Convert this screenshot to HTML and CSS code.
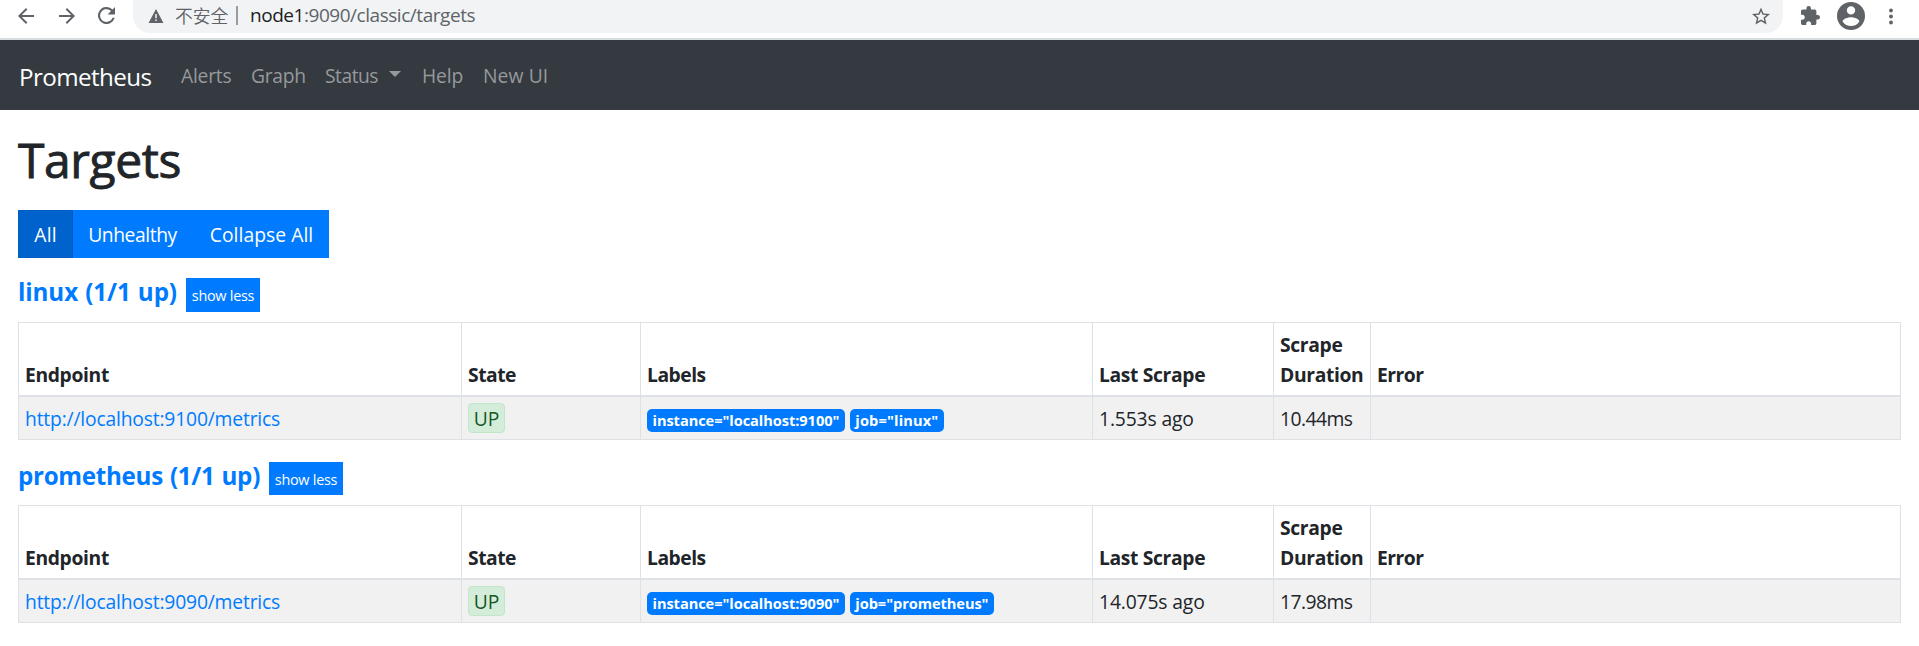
FILE: index.html
```html
<!DOCTYPE html>
<html lang="en">
<head>
<meta charset="utf-8">
<title>Prometheus Time Series Collection and Processing Server</title>
<link rel="stylesheet" href="styles.css">
</head>
<body>
<header class="browser">
  <svg class="nav-icon back" viewBox="0 0 16 16"><path d="M16 7H3.8l5.6-5.6L8 0 0 8l8 8 1.4-1.4L3.8 9H16z"/></svg>
  <svg class="nav-icon forward" viewBox="0 0 16 16"><path d="M8 0 6.6 1.4 12.2 7H0v2h12.2l-5.6 5.6L8 16l8-8z"/></svg>
  <svg class="nav-icon reload" viewBox="0 0 16 16"><path d="M13.65 2.35A8 8 0 1 0 15.73 10h-2.08A6 6 0 1 1 8 2c1.66 0 3.14.69 4.22 1.78L9 7h7V0z"/></svg>
  <div class="omnibox">
    <svg class="warn" viewBox="0 0 16 15"><path fill-rule="evenodd" d="M8 0 16 15H0zM7.2 5.3v4.5h1.6V5.3zM7.2 11.2v1.7h1.6v-1.7z"/></svg>
    <span class="insecure">不安全</span>
    <span class="sep"></span>
    <span class="url"><b>node1</b>:9090/classic/targets</span>
    <svg class="star" viewBox="2 2 20 19"><path d="M22 9.24l-7.19-.62L12 2 9.19 8.63 2 9.24l5.46 4.73L5.82 21 12 17.27 18.18 21l-1.63-7.03L22 9.24zM12 15.4l-3.76 2.27 1-4.28-3.32-2.88 4.38-.38L12 6.1l1.71 4.04 4.38.38-3.32 2.88 1 4.28L12 15.4z"/></svg>
  </div>
  <svg class="puzzle" viewBox="2 1 21 21"><path d="M20.5 11H19V7c0-1.1-.9-2-2-2h-4V3.500a2.500 2.500 0 0 0-5 0V5H4c-1.100 0-1.990.9-1.990 2v3.800H3.500c1.490 0 2.700 1.210 2.700 2.700s-1.210 2.700-2.700 2.700H2V20c0 1.100.9 2 2 2h3.800v-1.500c0-1.490 1.210-2.700 2.700-2.700s2.700 1.210 2.700 2.700V22H17c1.100 0 2-.9 2-2v-4h1.500a2.500 2.500 0 0 0 0-5z"/></svg>
  <svg class="avatar" viewBox="2 2 20 20"><path d="M12 2a10 10 0 1 0 0 20 10 10 0 0 0 0-20zm0 3a3 3 0 1 1 0 6 3 3 0 0 1 0-6zm0 14.200a7.200 7.200 0 0 1-6-3.220c.03-1.990 4-3.080 6-3.080s5.970 1.090 6 3.080a7.200 7.200 0 0 1-6 3.220z"/></svg>
  <svg class="menu" viewBox="0 0 4 16"><circle cx="2" cy="2" r="1.900"/><circle cx="2" cy="8" r="1.900"/><circle cx="2" cy="14" r="1.900"/></svg>
</header>
<nav class="navbar">
  <a class="brand">Prometheus</a>
  <a class="link alerts">Alerts</a>
  <a class="link graph">Graph</a>
  <a class="link status">Status</a><i class="caret"></i>
  <a class="link help">Help</a>
  <a class="link newui">New UI</a>
</nav>
<main class="content">
  <h1 class="title">Targets</h1>
  <div class="btn-group">
    <button class="btn active">All</button>
    <button class="btn unhealthy">Unhealthy</button>
    <button class="btn collapse">Collapse All</button>
  </div>

  <section class="job">
    <div class="job-head"><h2 class="job-name linux">linux (1/1 up)</h2><button class="toggle">show less</button></div>
    <table class="targets">
      <colgroup><col class="c1"><col class="c2"><col class="c3"><col class="c4"><col class="c5"><col class="c6"></colgroup>
      <thead><tr><th>Endpoint</th><th class="tight">State</th><th class="tight">Labels</th><th>Last Scrape</th><th>Scrape<br>Duration</th><th class="tight">Error</th></tr></thead>
      <tbody><tr>
        <td><a class="endpoint">http://localhost:9100/metrics</a></td>
        <td><span class="up">UP</span></td>
        <td><div class="labels"><span class="label">instance="localhost:9100"</span><span class="label short">job="linux"</span></div></td>
        <td>1.553s ago</td><td class="ms">10.44ms</td><td></td>
      </tr></tbody>
    </table>
  </section>

  <section class="job">
    <div class="job-head"><h2 class="job-name">prometheus (1/1 up)</h2><button class="toggle">show less</button></div>
    <table class="targets">
      <colgroup><col class="c1"><col class="c2"><col class="c3"><col class="c4"><col class="c5"><col class="c6"></colgroup>
      <thead><tr><th>Endpoint</th><th class="tight">State</th><th class="tight">Labels</th><th>Last Scrape</th><th>Scrape<br>Duration</th><th class="tight">Error</th></tr></thead>
      <tbody><tr>
        <td><a class="endpoint">http://localhost:9090/metrics</a></td>
        <td><span class="up">UP</span></td>
        <td><div class="labels"><span class="label">instance="localhost:9090"</span><span class="label">job="prometheus"</span></div></td>
        <td>14.075s ago</td><td class="ms">17.98ms</td><td></td>
      </tr></tbody>
    </table>
  </section>
</main>
</body>
</html>
```
FILE: styles.css
```css
* { box-sizing: border-box; }
body {
  margin: 0;
  height: 646px;
  overflow: hidden;
  background: #fff;
  color: #212529;
  font: 19.3px/30px "Open Sans", "Noto Sans CJK SC", sans-serif;
}
svg { display: block; flex: none; fill: #5f6368; }

/* Browser toolbar */
.browser {
  display: flex;
  align-items: flex-start;
  height: 40px;
  border-bottom: 2px solid #d8dddf;
}
.nav-icon { width: 16px; height: 16px; margin-top: 8px; }
.back { margin-left: 18px; }
.forward { margin-left: 25px; }
.reload { width: 17px; height: 17px; margin: 7px 0 0 23px; }
.omnibox {
  display: flex;
  align-items: flex-start;
  width: 1650px;
  height: 33px;
  margin-left: 18px;
  padding-left: 15px;
  border-radius: 0 0 17px 17px;
  background: #f1f3f4;
}
.warn { width: 16px; height: 14px; margin-top: 9px; }
.insecure {
  width: 56px;
  margin: 1px 0 0 11px;
  color: #5f6368;
  font: 350 17.8px/28px "Noto Sans CJK SC", sans-serif;
  white-space: nowrap;
}
.sep { width: 2px; height: 19px; margin: 6px 0 0 5px; background: #9a9da0; }
.url {
  margin: 0 0 0 12px;
  color: #5f6368;
  font-size: 19px;
  letter-spacing: -0.46px;
}
.url b { color: #202124; font-weight: 400; }
.star { width: 18px; height: 18px; margin: 7px 13px 0 auto; }
.puzzle { width: 19px; height: 19px; margin: 6px 0 0 18px; }
.avatar { width: 28px; height: 28px; margin: 2px 0 0 17px; }
.menu { width: 4px; height: 17px; margin: 8px 0 0 24px; }

/* Page navigation */
.navbar {
  display: flex;
  align-items: center;
  height: 70px;
  padding: 2px 0 0 19px;
  background: #343a40;
  color: #96999c;
}
.brand {
  width: 144px;
  color: #fff;
  font-size: 24.2px;
  letter-spacing: -0.6px;
  padding-top: 1px;
}
.link { margin-right: 19px; white-space: nowrap; }
.alerts { width: 50px; margin-left: 18px; margin-right: 20px; letter-spacing: -0.25px; }
.graph { width: 54px; margin-right: 20px; letter-spacing: -0.28px; }
.status { width: 53px; margin-right: 11px; letter-spacing: -0.5px; }
.caret {
  margin: -4px 21px 0 0;
  border: 6px solid transparent;
  border-top-color: #96999c;
  border-bottom: 0;
}
.help { width: 42px; letter-spacing: -0.17px; }
.newui { letter-spacing: 0.1px; }

/* Page body */
.content { padding: 20px 19px 0 18px; }
.title {
  margin: 0 0 20px;
  font-size: 48px;
  font-weight: 500;
  line-height: 60px;
  letter-spacing: -0.4px;
  -webkit-text-stroke: 0.9px currentColor;
}
.btn-group { display: flex; width: 311px; height: 48px; }
.btn {
  padding: 1px 0 0;
  border: 0;
  background: #007bff;
  color: #fff;
  font: inherit;
}
.active {
  width: 55px;
  border: 1px solid #005cbf;
  background: #0062cc;
  letter-spacing: 0.2px;
}
.unhealthy { width: 119px; letter-spacing: -0.44px; }
.collapse { width: 137px; padding-left: 2px; letter-spacing: 0.05px; }

.job-head {
  display: flex;
  align-items: flex-start;
  height: 34px;
  margin: 20px 0 10px;
}
.job + .job .job-head { margin-top: 22px; height: 33px; }
.job-name {
  width: 251px;
  margin: -1px 0 0;
  color: #007bff;
  font-size: 24.2px;
  font-weight: 700;
  line-height: 29px;
  letter-spacing: -0.3px;
  word-spacing: 1px;
  white-space: nowrap;
}
.linux { width: 168px; letter-spacing: -0.1px; }
.toggle {
  width: 74px;
  height: 100%;
  padding: 2px 0 0;
  border: 0;
  background: #007bff;
  color: #fff;
  font: 14.4px/22px "Open Sans", sans-serif;
  letter-spacing: -0.25px;
}

.targets {
  width: 1882px;
  border-collapse: collapse;
  table-layout: fixed;
}
.c1 { width: 443px; }
.c2 { width: 179px; }
.c3 { width: 452px; }
.c4 { width: 181px; }
.c5 { width: 97px; }
.c6 { width: 530px; }
.targets th, .targets td {
  border: 1px solid #dee2e6;
  text-align: left;
  white-space: nowrap;
}
.targets th {
  height: 73px;
  padding: 6px 6px 5px;
  border-bottom-width: 2px;
  font-weight: 700;
  letter-spacing: -0.35px;
  vertical-align: bottom;
}
.targets th.tight { letter-spacing: -0.48px; }
.targets td {
  height: 44px;
  padding: 3px 6px 0;
  background: #f1f1f1;
  letter-spacing: -0.14px;
}
.targets td.ms { letter-spacing: -0.55px; }
.endpoint { color: #007bff; letter-spacing: -0.18px; }
.up {
  display: block;
  width: 37px;
  height: 30px;
  margin-top: -3px;
  border: 1px solid #c3e6cb;
  border-radius: 4px;
  background: #d4edda;
  color: #155724;
  line-height: 29px;
  text-align: center;
}
.labels { display: flex; gap: 5px; padding-top: 3px; }
.label {
  height: 23px;
  padding: 0 5.500px;
  border-radius: 5px;
  background: #007bff;
  color: #fff;
  font-size: 14.6px;
  font-weight: 700;
  line-height: 23px;
  letter-spacing: -0.06px;
}
.short { letter-spacing: 0.15px; }
```
